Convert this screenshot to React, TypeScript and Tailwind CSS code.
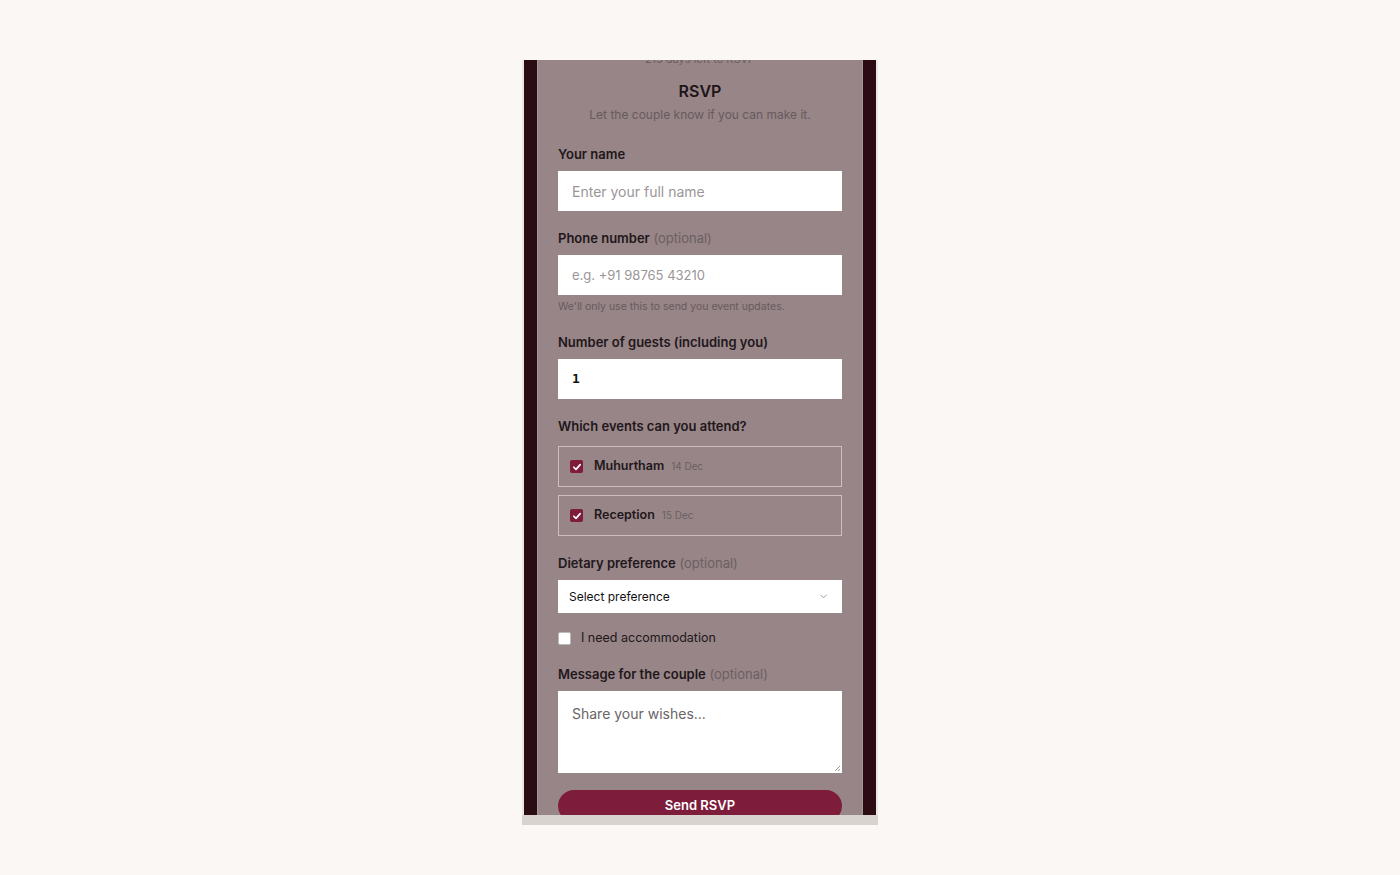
import { ChevronDown } from 'lucide-react';

type EventItem = { name: string; date: string };

const events: EventItem[] = [
    { name: 'Muhurtham', date: '14 Dec' },
    { name: 'Reception', date: '15 Dec' }
];

function Label({ text, optional }: { text: string; optional?: boolean }) {
    return (
        <div className="h-5 text-[13px] leading-5 font-semibold text-[#22171a]">
            {text}
            {optional && <span className="font-normal text-[#6c5f62]"> (optional)</span>}
        </div>
    );
}

function CheckMark() {
    return (
        <span className="flex h-[13px] w-[13px] items-center justify-center rounded-[2px] bg-[#7d1c3b]">
            <svg viewBox="0 0 12 12" className="h-[10px] w-[10px]" fill="none">
                <path d="M2.2 6.3 4.8 8.8 9.8 3.2" stroke="white" strokeWidth="2" strokeLinecap="round" strokeLinejoin="round" />
            </svg>
        </span>
    );
}

export default function App() {
    return (
        <div className="min-h-screen w-full bg-[#fbf7f4] pt-[60px]" style={{ fontFamily: 'Inter, "Noto Sans", sans-serif' }}>
            <div className="mx-auto w-[356px]">
                <div className="h-[755px] overflow-hidden border-x-2 border-[#ece6e2] bg-[#2c0c14] px-[13px]">
                    <div className="h-full overflow-hidden border-x border-[#a4969a] bg-[#978588] px-5">
                        <div className="-mt-[9px]">
                            <div className="h-4 text-center text-[11px] leading-4 text-[#6c5f62]">215 days left to RSVP</div>
                            <div className="mt-3 h-6 text-center text-[16px] leading-6 font-semibold text-[#1f1518]">RSVP</div>
                            <div className="mt-[2px] h-5 text-center text-[12px] leading-5 text-[#675a5d]">Let the couple know if you can make it.</div>

                            <div className="mt-[19px]">
                                <Label text="Your name" />
                                <input
                                    className="mt-[7px] block h-10 w-full bg-white px-[14px] text-[14px] text-[#222] outline-none placeholder:text-[#9b9698]"
                                    placeholder="Enter your full name"
                                />
                            </div>

                            <div className="mt-[17px]">
                                <Label text="Phone number" optional />
                                <input
                                    className="mt-[7px] block h-10 w-full bg-white px-[14px] text-[13px] text-[#222] outline-none placeholder:text-[#9b9698]"
                                    placeholder="e.g. +91 98765 43210"
                                />
                                <div className="mt-[5px] h-[14px] text-[10.5px] leading-[14px] text-[#675a5d]">We'll only use this to send you event updates.</div>
                            </div>

                            <div className="mt-[18px]">
                                <Label text="Number of guests (including you)" />
                                <div className="mt-[7px] flex h-10 w-full items-center bg-white px-[14px] text-[13px] font-bold text-[#111]" style={{ fontFamily: '"DejaVu Sans Mono", monospace' }}>
                                    1
                                </div>
                            </div>

                            <div className="mt-[17px]">
                                <Label text="Which events can you attend?" />
                                <div className="mt-[10px] flex flex-col gap-2">
                                    {events.map((ev) => (
                                        <div key={ev.name} className="flex h-[41px] items-center gap-[11px] border border-[#cbbfc1] px-[11px]">
                                            <CheckMark />
                                            <span className="text-[12.5px] font-semibold text-[#22171a]">{ev.name}</span>
                                            <span className="-ml-[4px] text-[10px] text-[#6c5f62]">{ev.date}</span>
                                        </div>
                                    ))}
                                </div>
                            </div>

                            <div className="mt-[17px]">
                                <Label text="Dietary preference" optional />
                                <div className="mt-[7px] flex h-[33px] w-full items-center justify-between bg-white pl-[11px] pr-[13px]">
                                    <span className="text-[12px] text-[#111]">Select preference</span>
                                    <ChevronDown className="h-[11px] w-[11px] text-[#777]" strokeWidth={1.5} />
                                </div>
                            </div>

                            <div className="mt-[15px] flex h-5 items-center gap-[10px]">
                                <span className="h-[13px] w-[13px] rounded-[2px] border border-[#bbb] bg-white" />
                                <span className="text-[12.5px] text-[#22171a]">I need accommodation</span>
                            </div>

                            <div className="mt-4">
                                <Label text="Message for the couple" optional />
                                <div className="relative mt-[7px] h-[82px] w-full bg-white px-[14px] pt-[12px] text-[14px] text-[#6b6466]">
                                    Share your wishes...
                                    <svg viewBox="0 0 8 8" className="absolute right-[1px] bottom-[1px] h-2 w-2">
                                        <path d="M7 2 2 7M7 5 5 7" stroke="#999" strokeWidth="1" />
                                    </svg>
                                </div>
                            </div>

                            <button className="mt-[17px] flex h-8 w-full items-center justify-center rounded-full bg-[#7d1c3b] text-[13px] font-semibold text-white">
                                Send RSVP
                            </button>
                        </div>
                    </div>
                </div>
                <div className="h-[10px] bg-[#d9d3d0]" />
            </div>
        </div>
    );
}
